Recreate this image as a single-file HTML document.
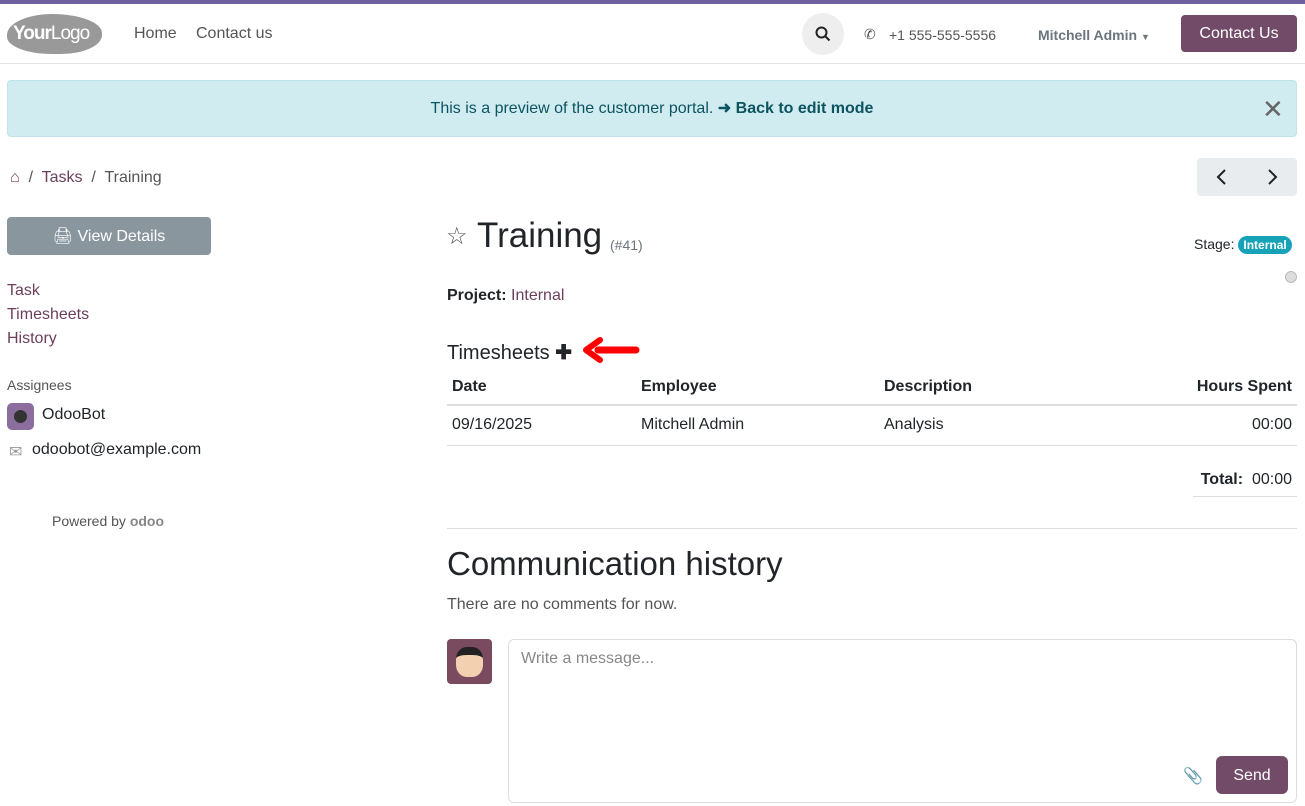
<!DOCTYPE html>
<html><head><meta charset="utf-8"><style>
*{box-sizing:border-box;margin:0;padding:0}
body{width:1305px;height:806px;overflow:hidden;background:#fff;font-family:"Liberation Sans",sans-serif;color:#212529;font-size:16px;position:relative}
.a{position:absolute}
.top{top:0;left:0;width:1305px;height:4px;background:#6e5f9e}
.hdr{top:4px;left:0;width:1305px;height:60px;border-bottom:1px solid #e5e5e5}
.nav{color:#555;font-size:16px}
.link{color:#6b3f5b}
table{border-collapse:collapse}
</style></head><body>
<div class="a top"></div>
<div class="a hdr"></div>
<div class="a" style="left:7px;top:14px;width:95px;height:40px;background:#999;border-radius:50% 55% 45% 50%/55% 50% 50% 45%;color:#fff;font-size:19px;line-height:40px;padding-left:6px;letter-spacing:-1px"><b>Your</b>Logo</div>
<div class="a nav" style="left:134px;top:25px">Home</div>
<div class="a nav" style="left:196px;top:25px">Contact us</div>
<div class="a" style="left:802px;top:13px;width:42px;height:42px;border-radius:50%;background:#eee"></div>
<svg class="a" style="left:815px;top:26px" width="16" height="16" viewBox="0 0 16 16"><circle cx="6.5" cy="6.5" r="5" fill="none" stroke="#222" stroke-width="2"/><path d="M10 10l4.5 4.5" stroke="#222" stroke-width="2"/></svg>
<div class="a" style="left:864px;top:26px;font-size:14px;color:#555">&#9990;</div>
<div class="a" style="left:889px;top:27px;font-size:14px;color:#555">+1 555-555-5556</div>
<div class="a" style="left:1038px;top:27px;font-size:14px;color:#6c757d;font-weight:bold">Mitchell Admin <span style="font-size:9px">&#9660;</span></div>
<div class="a" style="left:1181px;top:15px;width:116px;height:37px;background:#714b67;border-radius:4px;color:#fff;text-align:center;line-height:38px">Contact Us</div>
<div class="a" style="left:7px;top:80px;width:1290px;height:57px;background:#d1ecf1;border:1px solid #bee5eb;border-radius:4px;color:#0c5460;text-align:center;line-height:56px">This is a preview of the customer portal. <b>&#10140; Back to edit mode</b></div>
<div class="a" style="left:1262px;top:94px;font-size:26px;color:#666">&#10005;</div>
<div class="a" style="left:10px;top:169px;color:#555"><span class="link">&#8962;</span> &nbsp;/&nbsp; <span class="link">Tasks</span> &nbsp;/&nbsp; Training</div>
<div class="a" style="left:1197px;top:158px;width:100px;height:38px;background:#e9ecef;border-radius:4px"></div>
<svg class="a" style="left:1216px;top:169px" width="12" height="16"><path d="M9 1L2 8l7 7" fill="none" stroke="#222" stroke-width="2"/></svg>
<svg class="a" style="left:1266px;top:169px" width="12" height="16"><path d="M3 1l7 7-7 7" fill="none" stroke="#222" stroke-width="2"/></svg>
<div class="a" style="left:7px;top:217px;width:204px;height:38px;background:#8a969e;border-radius:4px;color:#fff;text-align:center;line-height:39px">&#128424; View Details</div>
<div class="a link" style="left:7px;top:279px;line-height:24px">Task<br>Timesheets<br>History</div>
<div class="a" style="left:7px;top:377px;font-size:14px;color:#555">Assignees</div>
<div class="a" style="left:7px;top:403px;width:27px;height:27px;border-radius:5px;background:#8b6e9e"><div style="margin:7px;width:13px;height:13px;border-radius:50%;background:#333"></div></div>
<div class="a" style="left:42px;top:406px">OdooBot</div>
<div class="a" style="left:9px;top:442px;color:#999">&#9993;</div>
<div class="a" style="left:32px;top:441px">odoobot@example.com</div>
<div class="a" style="left:52px;top:513px;font-size:14px;color:#555">Powered by <b style="color:#888">odoo</b></div>
<div class="a" style="left:446px;top:222px;font-size:24px;color:#555">&#9734;</div>
<div class="a" style="left:477px;top:216px;font-size:35px">Training</div>
<div class="a" style="left:610px;top:237px;font-size:14px;color:#6c757d">(#41)</div>
<div class="a" style="left:1194px;top:236px;font-size:14px">Stage: <span style="background:#17a2b8;color:#fff;font-size:12px;font-weight:bold;padding:2px 5px;border-radius:9px">Internal</span></div>
<div class="a" style="left:1285px;top:271px;width:12px;height:12px;border-radius:50%;background:#ddd;border:1px solid #bbb"></div>
<div class="a" style="left:447px;top:287px"><b>Project:</b> <span class="link">Internal</span></div>
<div class="a" style="left:447px;top:340px;font-size:20px">Timesheets <b>&#10010;</b></div>
<svg class="a" style="left:582px;top:337px" width="60" height="28"><path d="M54 13H16" stroke="#f00" stroke-width="7" stroke-linecap="round"/><path d="M18 3L4 13l14 10" fill="none" stroke="#f00" stroke-width="6" stroke-linecap="round" stroke-linejoin="round"/></svg>
<div class="a" style="left:447px;top:370px;width:850px">
<table style="width:850px">
<tr style="font-weight:bold;height:35px;border-bottom:2px solid #ddd"><td style="padding-left:5px;width:194px">Date</td><td style="width:243px">Employee</td><td>Description</td><td style="text-align:right;padding-right:5px">Hours Spent</td></tr>
<tr style="height:40px;border-bottom:1px solid #ddd"><td style="padding-left:5px">09/16/2025</td><td>Mitchell Admin</td><td>Analysis</td><td style="text-align:right;padding-right:5px">00:00</td></tr>
</table></div>
<div class="a" style="left:1193px;top:462px;width:104px;height:35px;border-bottom:1px solid #ddd;line-height:36px;text-align:right;padding-right:5px"><b>Total:</b> &nbsp;00:00</div>
<div class="a" style="left:447px;top:528px;width:850px;height:1px;background:#ddd"></div>
<div class="a" style="left:447px;top:545px;font-size:33px">Communication history</div>
<div class="a" style="left:447px;top:596px;color:#555">There are no comments for now.</div>
<div class="a" style="left:447px;top:639px;width:45px;height:45px;border-radius:4px;background:#7a4a5e;overflow:hidden"><div style="margin:8px 9px;width:27px;height:30px;border-radius:40%;background:#f3d0b0;border-top:8px solid #222"></div></div>
<div class="a" style="left:508px;top:639px;width:789px;height:164px;border:1px solid #ddd;border-radius:6px"></div>
<div class="a" style="left:521px;top:650px;color:#888">Write a message...</div>
<div class="a" style="left:1183px;top:766px;color:#333">&#128206;</div>
<div class="a" style="left:1216px;top:756px;width:72px;height:38px;background:#714b67;border-radius:6px;color:#fff;text-align:center;line-height:39px">Send</div>
</body></html>
